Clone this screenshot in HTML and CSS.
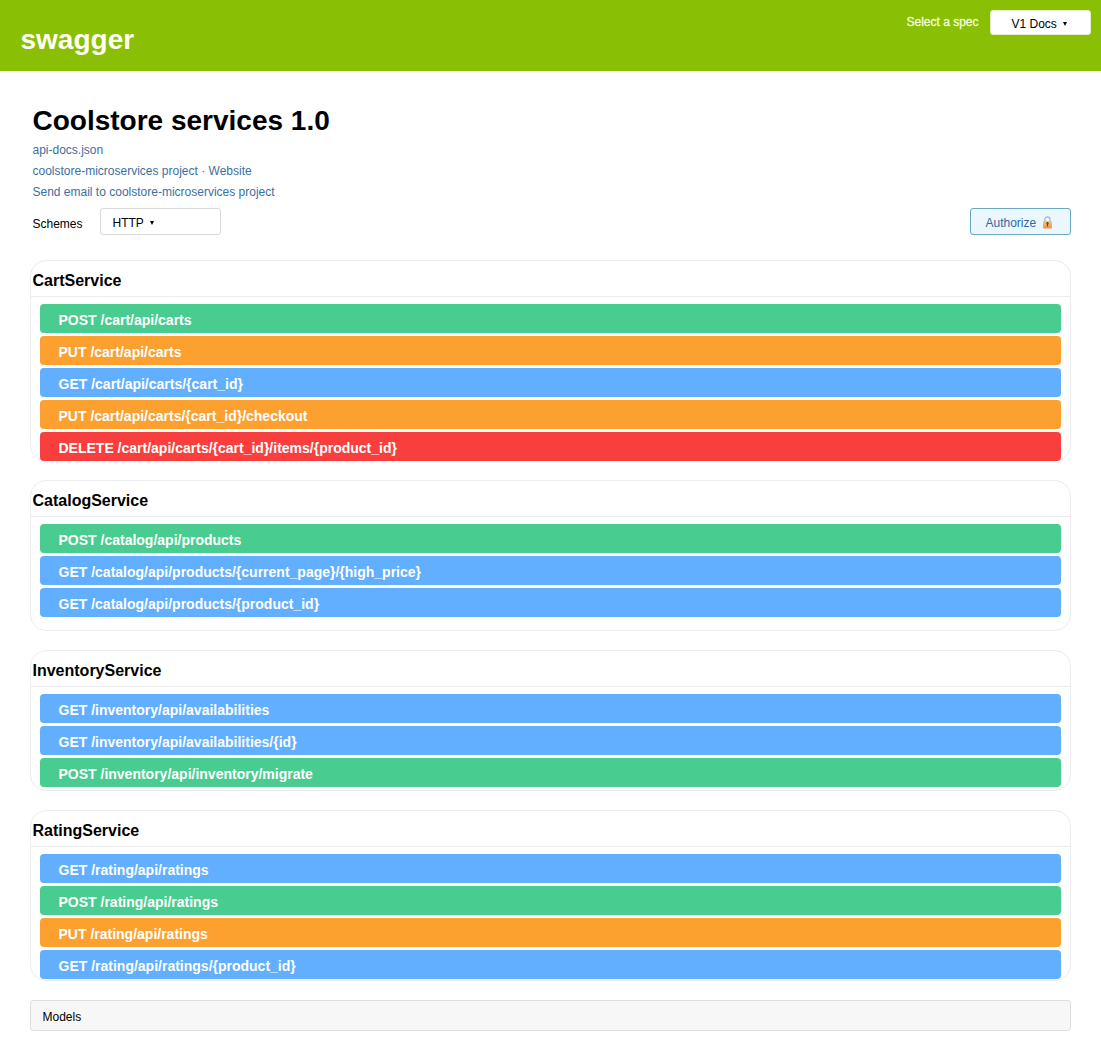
FILE: index.html
```html
<!DOCTYPE html>
<html lang="en">
<head>
<meta charset="utf-8">
<title>Coolstore services 1.0</title>
<link rel="stylesheet" href="styles.css">
</head>
<body>
<header class="topbar">
  <div class="brand">swagger</div>
  <div class="spec">
    <span class="spec-label">Select a spec</span>
    <button class="spec-select">V1 Docs<span class="caret"></span></button>
  </div>
</header>
<main>
  <section class="info">
    <h1>Coolstore services 1.0</h1>
    <a>api-docs.json</a>
    <a>coolstore-microservices project · Website</a>
    <a>Send email to coolstore-microservices project</a>
  </section>
  <div class="controls">
    <span class="schemes-label">Schemes</span>
    <button class="scheme-select">HTTP<span class="caret"></span></button>
    <button class="authorize">Authorize
      <svg class="lock" width="11" height="13" viewBox="0 0 11 13">
        <defs><linearGradient id="gold" x1="0" y1="0" x2="0" y2="1"><stop offset="0" stop-color="#f6c578"/><stop offset="1" stop-color="#ee9245"/></linearGradient></defs>
        <path d="M2.8 6V3.4a2.6 2.6 0 0 1 5.2 0V6" fill="none" stroke="#a9b3b8" stroke-width="1.2"/>
        <rect x="1" y="5" width="9" height="7.6" rx="1" fill="url(#gold)"/>
        <path d="M4.3 7.2a1.2 1.2 0 0 1 2.4 0L6.1 8.4V10.6H4.9V8.4Z" fill="#70421f"/>
      </svg>
    </button>
  </div>
  <section class="service cart">
    <h2>CartService</h2>
    <div class="ops">
      <div class="op post">POST /cart/api/carts</div>
      <div class="op put">PUT /cart/api/carts</div>
      <div class="op get">GET /cart/api/carts/{cart_id}</div>
      <div class="op put">PUT /cart/api/carts/{cart_id}/checkout</div>
      <div class="op delete">DELETE /cart/api/carts/{cart_id}/items/{product_id}</div>
    </div>
  </section>
  <section class="service catalog">
    <h2>CatalogService</h2>
    <div class="ops">
      <div class="op post">POST /catalog/api/products</div>
      <div class="op get">GET /catalog/api/products/{current_page}/{high_price}</div>
      <div class="op get">GET /catalog/api/products/{product_id}</div>
    </div>
  </section>
  <section class="service inventory">
    <h2>InventoryService</h2>
    <div class="ops">
      <div class="op get">GET /inventory/api/availabilities</div>
      <div class="op get">GET /inventory/api/availabilities/{id}</div>
      <div class="op post">POST /inventory/api/inventory/migrate</div>
    </div>
  </section>
  <section class="service rating">
    <h2>RatingService</h2>
    <div class="ops">
      <div class="op get">GET /rating/api/ratings</div>
      <div class="op post">POST /rating/api/ratings</div>
      <div class="op put">PUT /rating/api/ratings</div>
      <div class="op get">GET /rating/api/ratings/{product_id}</div>
    </div>
  </section>
  <section class="models">Models</section>
</main>
</body>
</html>
```
FILE: styles.css
```css
* { box-sizing: border-box; }
body {
  margin: 0;
  background: #fff;
  color: #000;
  font: 12px/21px "Liberation Sans", Arial, sans-serif;
}
button {
  display: flex;
  align-items: center;
  font: inherit;
  line-height: 14px;
  color: #000;
  background: #fff;
  border: 1px solid #d9d9d9;
  border-radius: 3px;
}
.topbar {
  display: flex;
  justify-content: space-between;
  align-items: flex-start;
  height: 71px;
  padding: 10px 10px 0 20.5px;
  background: #89bf04;
  color: #fff;
}
.brand {
  padding-top: 14px;
  font-size: 28px;
  line-height: 32px;
  font-weight: bold;
  color: #fffff4;
}
.spec { display: flex; gap: 11.5px; }
.spec-label {
  padding-top: 2px;
  color: #f4ffd8;
  -webkit-text-stroke: 0.3px #f4ffd8;
}
.spec-select {
  width: 101px;
  height: 25px;
  padding: 2px 0 0 20.5px;
  border-color: #e4efc8;
}
.caret {
  margin-left: 6px;
  border: 2.5px solid transparent;
  border-width: 4px 2.5px 0;
  border-top-color: #000;
}
main { padding: 33px 30px 0; }
.info { padding-left: 2.5px; }
h1 {
  margin: 0 0 2px;
  font-size: 28px;
  line-height: 34px;
}
.info a { display: block; color: #3b6fa0; }
.controls {
  display: flex;
  height: 27px;
  margin: 5px 0 25px;
  padding-left: 2.5px;
}
.schemes-label { width: 67.5px; padding-top: 6px; }
.scheme-select { width: 121px; height: 27px; padding: 2px 0 0 11.5px; }
.authorize {
  width: 101px;
  height: 27px;
  margin-left: auto;
  padding: 2px 0 0 14.5px;
  color: #31699e;
  background: #ebf7fe;
  border-color: #6ba9bf;
}
.lock { margin-left: 5.5px; }
.service {
  width: 1041px;
  margin-bottom: 19px;
  border: 1px solid #ececee;
  border-radius: 16px;
}
.cart { height: 201px; }
.catalog { height: 151px; }
.inventory { height: 141px; }
.rating { height: 171px; }
h2 {
  height: 36px;
  margin: 0;
  padding: 2px 0 0 1.5px;
  border-bottom: 1px solid #ececee;
  font-size: 16px;
  line-height: 35px;
}
.ops {
  display: grid;
  gap: 3px;
  padding: 7px 9px 0;
}
.op {
  height: 29px;
  padding: 2px 0 0 18.5px;
  border-radius: 4px;
  color: #fff;
  font-size: 14px;
  line-height: 29px;
  font-weight: bold;
}
.post { background: #49cc90; }
.put { background: #fca130; }
.get { background: #61affe; }
.delete { background: #f93e3e; }
.models {
  height: 31px;
  padding: 1px 0 0 11.5px;
  border: 1px solid #dedede;
  border-radius: 3px;
  background: #f7f7f7;
  line-height: 31px;
}
```
